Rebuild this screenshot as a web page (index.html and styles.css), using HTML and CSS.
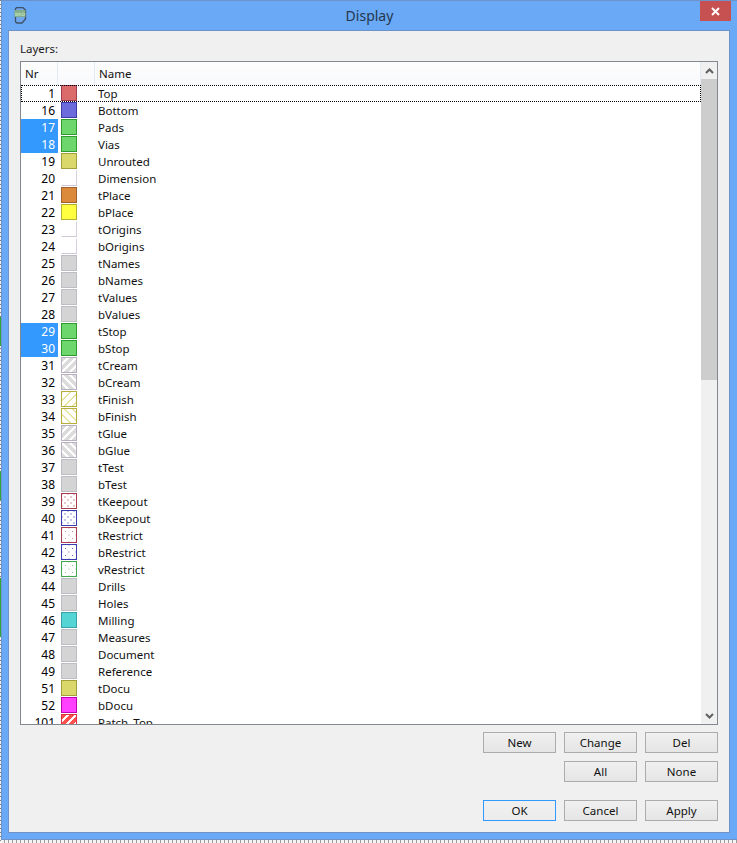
FILE: index.html
```html
<!DOCTYPE html>
<html lang="en">
<head>
<meta charset="utf-8">
<title>Display</title>
<link rel="stylesheet" href="styles.css">
</head>
<body>
<div class="screen">
  <div class="desk">
    <div class="d1"></div><div class="dg g1"></div><div class="d2"></div><div class="dg g1"></div><div class="d3"></div><div class="dg g2"></div>
  </div>
  <div class="window">
    <div class="titlebar">
      <svg class="appicon" width="13" height="17" viewBox="0 0 13 17"><path d="M2.5 0.7 H9 L11.5 3 V12 L8 16 H3.5 Q1.5 16 1.5 14 V1.7 Z" fill="#6fa8ee" stroke="#3f5268" stroke-width="1.3"/><rect x="0.5" y="3" width="11" height="7" fill="#84ab8c"/><text x="6" y="9" class="icontext" text-anchor="middle">BRD</text></svg>
      <div class="title">Display</div>
      <div class="close"><svg width="9" height="9" viewBox="0 0 9 9"><path d="M1 1 L8 8 M8 1 L1 8" stroke="#fff" stroke-width="2"/></svg></div>
    </div>
    <div class="panel">
      <div class="label">Layers:</div>
      <div class="table">
        <div class="main">
          <div class="head">
            <div class="hc">Nr</div><div class="hc"></div><div class="hc">Name</div>
          </div>
          <div class="rows">
            <div class="row focus"><span class="nr">1</span><span class="sw red"></span><span class="nm">Top</span></div>
            <div class="row"><span class="nr">16</span><span class="sw blue"></span><span class="nm">Bottom</span></div>
            <div class="row"><span class="nr sel">17</span><span class="sw green"></span><span class="nm">Pads</span></div>
            <div class="row"><span class="nr sel">18</span><span class="sw green"></span><span class="nm">Vias</span></div>
            <div class="row"><span class="nr">19</span><span class="sw khaki"></span><span class="nm">Unrouted</span></div>
            <div class="row"><span class="nr">20</span><span class="sw white"></span><span class="nm">Dimension</span></div>
            <div class="row"><span class="nr">21</span><span class="sw orange"></span><span class="nm">tPlace</span></div>
            <div class="row"><span class="nr">22</span><span class="sw yellow"></span><span class="nm">bPlace</span></div>
            <div class="row"><span class="nr">23</span><span class="sw white"></span><span class="nm">tOrigins</span></div>
            <div class="row"><span class="nr">24</span><span class="sw white"></span><span class="nm">bOrigins</span></div>
            <div class="row"><span class="nr">25</span><span class="sw grey"></span><span class="nm">tNames</span></div>
            <div class="row"><span class="nr">26</span><span class="sw grey"></span><span class="nm">bNames</span></div>
            <div class="row"><span class="nr">27</span><span class="sw grey"></span><span class="nm">tValues</span></div>
            <div class="row"><span class="nr">28</span><span class="sw grey"></span><span class="nm">bValues</span></div>
            <div class="row"><span class="nr sel">29</span><span class="sw green"></span><span class="nm">tStop</span></div>
            <div class="row"><span class="nr sel">30</span><span class="sw green"></span><span class="nm">bStop</span></div>
            <div class="row"><span class="nr">31</span><span class="sw hatch-f"></span><span class="nm">tCream</span></div>
            <div class="row"><span class="nr">32</span><span class="sw hatch-b"></span><span class="nm">bCream</span></div>
            <div class="row"><span class="nr">33</span><span class="sw thin-f"></span><span class="nm">tFinish</span></div>
            <div class="row"><span class="nr">34</span><span class="sw thin-b"></span><span class="nm">bFinish</span></div>
            <div class="row"><span class="nr">35</span><span class="sw hatch-f"></span><span class="nm">tGlue</span></div>
            <div class="row"><span class="nr">36</span><span class="sw hatch-b"></span><span class="nm">bGlue</span></div>
            <div class="row"><span class="nr">37</span><span class="sw grey"></span><span class="nm">tTest</span></div>
            <div class="row"><span class="nr">38</span><span class="sw grey"></span><span class="nm">bTest</span></div>
            <div class="row"><span class="nr">39</span><span class="sw dense-red"></span><span class="nm">tKeepout</span></div>
            <div class="row"><span class="nr">40</span><span class="sw dense-blue"></span><span class="nm">bKeepout</span></div>
            <div class="row"><span class="nr">41</span><span class="sw sparse-red"></span><span class="nm">tRestrict</span></div>
            <div class="row"><span class="nr">42</span><span class="sw sparse-blue"></span><span class="nm">bRestrict</span></div>
            <div class="row"><span class="nr">43</span><span class="sw sparse-green"></span><span class="nm">vRestrict</span></div>
            <div class="row"><span class="nr">44</span><span class="sw grey"></span><span class="nm">Drills</span></div>
            <div class="row"><span class="nr">45</span><span class="sw grey"></span><span class="nm">Holes</span></div>
            <div class="row"><span class="nr">46</span><span class="sw cyan"></span><span class="nm">Milling</span></div>
            <div class="row"><span class="nr">47</span><span class="sw grey"></span><span class="nm">Measures</span></div>
            <div class="row"><span class="nr">48</span><span class="sw grey"></span><span class="nm">Document</span></div>
            <div class="row"><span class="nr">49</span><span class="sw grey"></span><span class="nm">Reference</span></div>
            <div class="row"><span class="nr">51</span><span class="sw khaki"></span><span class="nm">tDocu</span></div>
            <div class="row"><span class="nr">52</span><span class="sw magenta"></span><span class="nm">bDocu</span></div>
            <div class="row"><span class="nr">101</span><span class="sw hatch-red"></span><span class="nm">Patch_Top</span></div>
          </div>
        </div>
        <div class="scrollbar">
          <div class="arrow"><svg width="9" height="6" viewBox="0 0 9 6"><path d="M1 5 L4.5 1.5 L8 5" fill="none" stroke="#606060" stroke-width="2"/></svg></div>
          <div class="thumb"></div>
          <div class="track"></div>
          <div class="arrow"><svg width="9" height="6" viewBox="0 0 9 6"><path d="M1 1 L4.5 4.5 L8 1" fill="none" stroke="#606060" stroke-width="2"/></svg></div>
        </div>
      </div>
      <div class="buttons">
        <button class="btn">New</button><button class="btn">Change</button><button class="btn">Del</button>
        <button class="btn c2">All</button><button class="btn">None</button>
      </div>
      <div class="buttons actions">
        <button class="btn default">OK</button><button class="btn">Cancel</button><button class="btn">Apply</button>
      </div>
    </div>
  </div>
</div>
</body>
</html>
```
FILE: styles.css
```css
* { box-sizing: border-box; }
html, body { margin: 0; padding: 0; }
body { width: 737px; height: 843px; overflow: hidden; font-family: "Noto Sans", sans-serif; font-size: 11.5px; color: #000; background: #fff; }

.screen { display: flex; width: 737px; height: 843px; background: repeating-linear-gradient(90deg, #9a9a9a 0 1px, #f4f4f4 1px 4px); }

.desk { width: 1px; display: flex; flex-direction: column; background: repeating-linear-gradient(180deg, #808080 0 1px, #f0f0f0 1px 4px); }
.d1 { height: 317px; }
.d2 { height: 125px; }
.d3 { height: 78px; }
.dg { background: #2fa83a; }
.g1 { height: 29px; }
.g2 { height: 59px; }

.window { width: 736px; height: 840px; background: #69a9f5; border: 1px solid #6f93c8; border-right: 0; display: flex; flex-direction: column; }

.titlebar { height: 29px; display: grid; grid-template-columns: 1fr auto 1fr; align-items: start; }
.appicon { margin: 6px 0 0 12px; }
.icontext { font-family: "DejaVu Sans", sans-serif; font-size: 4.5px; font-weight: 700; fill: #b4dcb4; }
.title { font-size: 14px; line-height: 18px; margin-top: 6px; color: #26374d; }
.close { justify-self: end; width: 31px; height: 20px; margin-right: 6px; background: #c75050; display: flex; align-items: center; justify-content: center; }

.panel { flex: 1; margin: 0 7px 6px 6px; background: #f0f0f0; border: 1px solid #6f93c8; padding: 10px 11px 0; display: flex; flex-direction: column; }
.label { height: 20px; line-height: 15px; color: #1a1a1a; }

.table { height: 664px; flex: none; display: flex; border: 1px solid #828790; background: #fff; }
.main { flex: 1; min-width: 0; display: flex; flex-direction: column; }

.head { height: 23px; flex: none; display: grid; grid-template-columns: 37px 37px 1fr; background: linear-gradient(#fdfdfd, #f8f9fb); }
.hc { line-height: 23px; padding-left: 4px; border-right: 1px solid #e4eaf3; color: #111; }

.rows { flex: 1; overflow: hidden; }
.row { height: 17px; display: grid; grid-template-columns: 37px 37px 1fr; line-height: 17px; }
.focus { outline: 1px dotted #000; outline-offset: -1px; }
.nr { text-align: right; padding-right: 3px; height: 17px; font-size: 12px; }
.sel { background: #3399ff; color: #fff; }
.sw { width: 16px; height: 16px; margin-left: 3px; border: 1px solid #a8a8a8; background-color: #fff; }
.nm { padding-left: 3px; color: #111; }

.red { background: #db6b6b; border-color: #a03c50; }
.blue { background: #6b6bdb; border-color: #3c3ca8; }
.green { background: #6dd66d; border-color: #2f9a2f; }
.khaki { background: #dbd86b; border-color: #a3a03c; }
.white { background: #fff; border-color: #fff #d8d0de #d0c8d8 #fff; }
.orange { background: #db8a3c; border-color: #a06030; }
.yellow { background: #ffff40; border-color: #b4b030; }
.grey { background: #d4d4d4; border-color: #bdbdc4; }
.cyan { background: #55d4d4; border-color: #38a0a8; }
.magenta { background: #ff40ff; border-color: #c000b0; }
.hatch-f { border-color: #b8b0c0; background: repeating-linear-gradient(135deg, #dcdcdc 0 3px, #fff 3px 5.6px); }
.hatch-b { border-color: #b8b0c0; background: repeating-linear-gradient(45deg, #dcdcdc 0 3px, #fff 3px 5.6px); }
.thin-f { border-color: #b8ae40; background: repeating-linear-gradient(135deg, #e6e2a0 0 1px, #fff 1px 5.6px); }
.thin-b { border-color: #b8ae40; background: repeating-linear-gradient(45deg, #e6e2a0 0 1px, #fff 1px 5.6px); }
.hatch-red { border-color: #e03040; background: repeating-linear-gradient(135deg, #ff5050 0 3px, #fff 3px 5.6px); }
.dense-red { border-color: #a83c50; background: radial-gradient(circle, #b84a5a 0 .5px, transparent .8px) 0 0 / 6px 6px, radial-gradient(circle, #b84a5a 0 .5px, transparent .8px) 3px 3px / 6px 6px, #fff; }
.dense-blue { border-color: #3c3cb0; background: radial-gradient(circle, #4a4ac0 0 .5px, transparent .8px) 0 0 / 6px 6px, radial-gradient(circle, #4a4ac0 0 .5px, transparent .8px) 3px 3px / 6px 6px, #fff; }
.sparse-red { border-color: #a83c50; background: radial-gradient(circle, #d08a94 0 .5px, transparent .8px) 0 0 / 7px 7px, radial-gradient(circle, #d08a94 0 .5px, transparent .8px) 3.5px 3.5px / 7px 7px, #fff; }
.sparse-blue { border-color: #3c3cb0; background: radial-gradient(circle, #6868d0 0 .5px, transparent .8px) 0 0 / 7px 7px, radial-gradient(circle, #6868d0 0 .5px, transparent .8px) 3.5px 3.5px / 7px 7px, #fff; }
.sparse-green { border-color: #40a850; background: radial-gradient(circle, #80c888 0 .5px, transparent .8px) 0 0 / 7px 7px, radial-gradient(circle, #80c888 0 .5px, transparent .8px) 3.5px 3.5px / 7px 7px, #fff; }

.scrollbar { width: 16px; flex: none; display: flex; flex-direction: column; background: #f0f0f0; }
.arrow { height: 17px; flex: none; display: flex; align-items: center; justify-content: center; }
.thumb { height: 301px; flex: none; background: #cdcdcd; }
.track { flex: 1; }

.buttons { margin-top: 7px; display: grid; grid-template-columns: repeat(3, 73px); grid-auto-rows: 21px; column-gap: 8px; row-gap: 8px; justify-content: end; }
.actions { margin-top: 18px; }
.btn { font: inherit; color: #111; padding: 0; border: 1px solid #acacac; background: linear-gradient(#f0f0f0, #e5e5e5); }
.c2 { grid-column: 2; }
.default { border-color: #3399ff; background: linear-gradient(#f0f0f0, #ececec); }
```
